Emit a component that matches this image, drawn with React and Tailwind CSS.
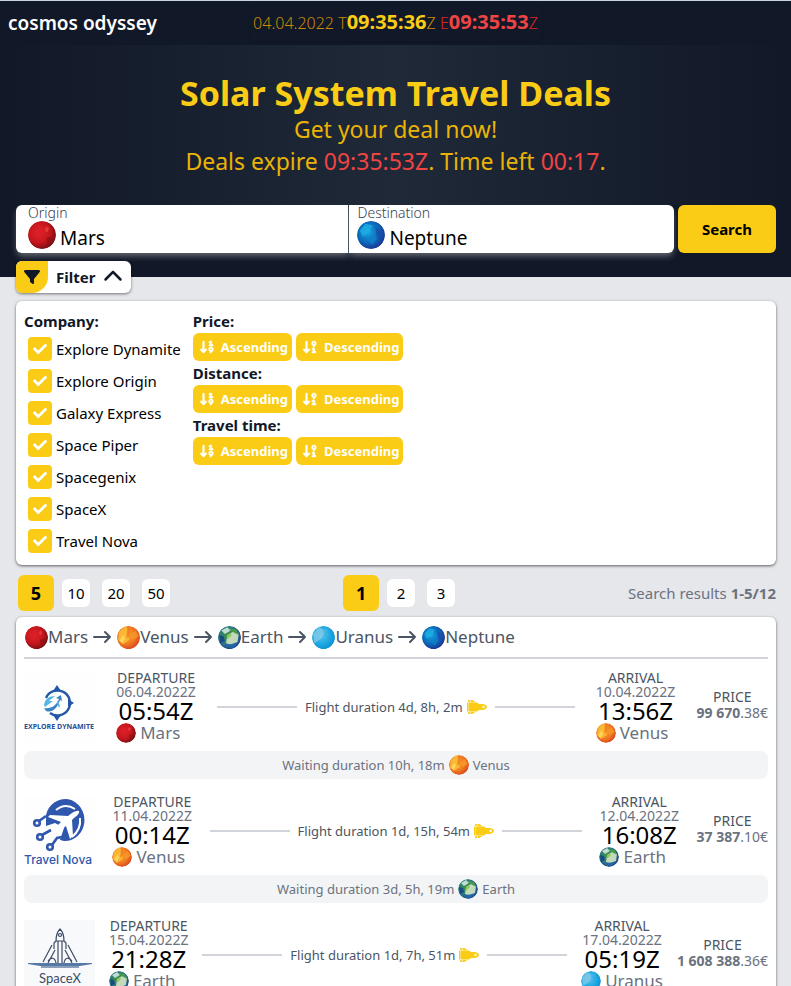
import React from "react";
import { FaCheck } from "react-icons/fa";
import { FaFilter, FaChevronUp, FaArrowDown19, FaArrowDown91 } from "react-icons/fa6";

const planetArt = {
  Mars: { stops: ["#e3222b", "#c4161c", "#6d0f12"], marks: [["M5 6l4-2 3 3-2 4-5 1z", "#d91f2a"], ["M13 12l4-1 1 4-4 3z", "#8f1115"], ["M13 4l2 1-1 3-2-1z", "#ee4444"]] },
  Venus: { stops: ["#fba62a", "#f07a22", "#d8431c"], marks: [["M2 5l5-5 3 3-1 5 2 4-6 4-4-4z", "#fdc43a"], ["M10 9l6-5 3 5-5 3z", "#f89a2a"], ["M5 8l2 2-2 5-3-2z", "#fbe06a"], ["M9 1l2 0 0 7-3 3z", "#ee7d20"]] },
  Earth: { stops: ["#3d9140", "#2c7a86", "#1c3f8c"], marks: [["M8 8l5-3 5 2-1 7-6 2-4-1z", "#f4fad2"], ["M3 4l5-3 3 3-5 3z", "#f2faf6"], ["M9 2l7 1 2 5-4-2z", "#53a637"], ["M3 15l5 1 9-1-5 5z", "#2667ad"], ["M1 8l4 1 1 4-4 2z", "#143a86"], ["M8 8l3-2 1 2-4 4z", "#7fbf4a"]] },
  Uranus: { stops: ["#5cc0ea", "#1ea9e3", "#0b8fd0"], marks: [["M1 7l5-6 6 3-4 7-6 4z", "#86cbe8"], ["M9 3l6-1-4 6z", "#42b4e6"]] },
  Neptune: { stops: ["#18a4e0", "#0b67b8", "#20308f"], marks: [["M2 7l4-5 5 1-2 5-5 3z", "#1fb2e6"], ["M7 13l5-4 2 4-3 4z", "#0f82ca"], ["M13 4l5 4-1 7-3-5z", "#1d4aa8"]] },
};

function Planet({ name, className }) {
  const { stops, marks } = planetArt[name];
  const id = React.useId();
  return (
    <svg viewBox="0 0 20 20" className={`shrink-0 ${className}`} aria-hidden="true">
      <defs>
        <radialGradient id={id} cx="0.4" cy="0.4" r="0.65">
          <stop offset="0" stopColor={stops[0]} />
          <stop offset="0.6" stopColor={stops[1]} />
          <stop offset="1" stopColor={stops[2]} />
        </radialGradient>
        <clipPath id={id + "c"}><circle cx="10" cy="10" r="10" /></clipPath>
      </defs>
      <g clipPath={`url(#${id}c)`}>
        <circle cx="10" cy="10" r="10" fill={`url(#${id})`} />
        {marks.map(([d, fill]) => <path key={d} d={d} fill={fill} opacity="0.75" />)}
      </g>
    </svg>
  );
}

function DynamiteLogo() {
  return (
    <svg viewBox="0 0 71 71" className="size-[71px] shrink-0" role="img" aria-label="Explore Dynamite">
      <rect width="71" height="71" fill="#fefefe" />
      <path d="M22 26a12.500 12.500 0 1 1 4 15" fill="none" stroke="#2458a6" strokeWidth="2.4" />
      <path d="M33 13l4 6h-8zM33 49l4-6h-8zM50 31l-6-4v8z" fill="#2458a6" />
      <path d="M20 36c7 1 12-2 15-9l-3-1 5-3 1 6-2-1c-3 9-8 13-14 11z" fill="#3b82c8" />
      <path d="M20 33c1-6 5-9 11-9l-6 5 4 0-8 6z" fill="#57b7e6" />
      <path d="M34 28l2 6-1 2-2-5z" fill="#57b7e6" />
      <text x="35" y="57" textAnchor="middle" className="font-['Open_Sans',sans-serif] text-[7px] font-bold" fill="#1f4f96">EXPLORE DYNAMITE</text>
    </svg>
  );
}

function NovaLogo() {
  return (
    <svg viewBox="0 0 71 71" className="size-[71px] shrink-0" role="img" aria-label="Travel Nova">
      <rect width="71" height="71" fill="#fefefe" />
      <path d="M22 19a19.500 21 0 1 1 18 26l-4-1 4-12-9-5-9 3z" fill="#2f57ae" />
      <path d="M32 14c6-5 13-5 19-1M56 22c1 8-2 14-8 19" fill="none" stroke="#fff" strokeWidth="2" />
      <path d="M55 15c-3-1-7 2-11 5l-18-1-2 2 13 5-6 6-5-1-2 2 6 3 3 6 2-1 0-5 7-6 4 13 3-3-1-16c4-4 8-6 7-9z" fill="#fff" />
      <g fill="none" stroke="#2f57ae" strokeWidth="2.6">
        <circle cx="13" cy="27" r="2.8" /><circle cx="16" cy="41" r="2.8" /><circle cx="26" cy="51" r="2.8" />
        <path d="M15 25l7-5M18 39l9-5M28 49l5-7 5-1" />
      </g>
      <text x="34" y="68" textAnchor="middle" className="font-[Inter,sans-serif] text-[12px] font-medium" fill="#2f57ae">Travel Nova</text>
    </svg>
  );
}

function SpaceXLogo() {
  return (
    <svg viewBox="0 0 71 71" className="size-[71px] shrink-0" role="img" aria-label="SpaceX">
      <rect width="71" height="71" fill="#f8f9fa" />
      <g fill="none" stroke="#3c4a66" strokeWidth="1.2">
        <path d="M32 21c0-6 2-10 4-12 2 2 4 6 4 12M32 21l-2 2v6M40 21l2 2v6M32 21h8M34 21v22M38 21v22M28 25l-9 17M44 25l9 17M31 30l-7 13M41 30l7 13M24 41c3-4 7-4 8 2M48 41c-3-4-7-4-8 2" />
        <circle cx="36" cy="15" r="1.5" />
      </g>
      <path d="M4 43h64v1l-12 2H16L4 44z" fill="#5679a6" />
      <path d="M17 46h38v2H17z" fill="#8ba0bd" />
      <text x="36" y="63" textAnchor="middle" className="font-[Lato,sans-serif] text-[13px]" fill="#3c4a66">SpaceX</text>
    </svg>
  );
}

function RouteArrow() {
  return (
    <svg viewBox="0 0 20 20" className="mx-1 size-5" fill="none" stroke="currentColor" strokeWidth="2" strokeLinecap="round" strokeLinejoin="round" aria-hidden="true">
      <path d="M2 10h16M13 5l5 5-5 5" />
    </svg>
  );
}

function Rocket() {
  return (
    <svg viewBox="0 0 20 14" className="h-3.5 w-5 shrink-0 text-[#facc15]" fill="currentColor" fillRule="evenodd" aria-hidden="true">
      <path d="M0 2.500h1.500v9H0zM1 0h2v1.800H1zM1 12.200h2v1.800H1zM3.600 0h1.600l3.600 2.200H3.600zM3.600 11.800h5.200L5.200 14H3.600z" />
      <path d="M1.800 2.400h8.200l2 1.600h3c3 0 5 1.600 5 3s-2 3-5 3h-3l-2 1.600H1.800zM15.600 5.800v2.200h1.600c.5-.6.500-1.600 0-2.200z" />
    </svg>
  );
}

const companies = ["Explore Dynamite", "Explore Origin", "Galaxy Express", "Space Piper", "Spacegenix", "SpaceX", "Travel Nova"];
const route = ["Mars", "Venus", "Earth", "Uranus", "Neptune"];

const legs = [
  { Logo: DynamiteLogo, dep: ["06.04.2022Z", "05:54Z", "Mars"], arr: ["10.04.2022Z", "13:56Z", "Venus"], flight: "4d, 8h, 2m", price: ["99 670", ".38€"], wait: "10h, 18m" },
  { Logo: NovaLogo, dep: ["11.04.2022Z", "00:14Z", "Venus"], arr: ["12.04.2022Z", "16:08Z", "Earth"], flight: "1d, 15h, 54m", price: ["37 387", ".10€"], wait: "3d, 5h, 19m" },
  { Logo: SpaceXLogo, dep: ["15.04.2022Z", "21:28Z", "Earth"], arr: ["17.04.2022Z", "05:19Z", "Uranus"], flight: "1d, 7h, 51m", price: ["1 608 388", ".36€"] },
];

function Stop({ label, info: [date, time, planet] }) {
  return (
    <div className="flex flex-col items-center whitespace-nowrap">
      <span className="text-sm leading-[14px] text-[#4b5563]">{label}</span>
      <span className="text-sm leading-[14px] text-[#6b7280]">{date}</span>
      <span className="text-2xl leading-6 text-black">{time}</span>
      <span className="flex items-center gap-1 self-start text-[17px] leading-5 text-[#6b7280]">
        <Planet name={planet} className="size-5" />
        {planet}
      </span>
    </div>
  );
}

function Leg({ leg }) {
  const { Logo } = leg;
  return (
    <li>
      <div className="flex items-center justify-between pt-3 pb-2">
        <Logo />
        <Stop label="DEPARTURE" info={leg.dep} />
        <div className="flex items-center gap-2 text-[13px] whitespace-nowrap text-[#4b5563]">
          <span className="h-[2px] w-20 bg-[#d1d5db]" />
          <span className="flex items-center gap-1">Flight duration {leg.flight} <Rocket /></span>
          <span className="h-[2px] w-20 bg-[#d1d5db]" />
        </div>
        <Stop label="ARRIVAL" info={leg.arr} />
        <div className="flex flex-col items-center pb-1 text-sm leading-4 whitespace-nowrap">
          <span className="text-[#4b5563]">PRICE</span>
          <span className="text-[#6b7280]"><b>{leg.price[0]}</b>{leg.price[1]}</span>
        </div>
      </div>
      {leg.wait && (
        <div className="mb-1 flex h-7 items-center justify-center gap-1 rounded-lg bg-[#f3f4f6] text-[13px] text-[#6b7280]">
          Waiting duration {leg.wait} <Planet name={leg.arr[2]} className="size-5" /> {leg.arr[2]}
        </div>
      )}
    </li>
  );
}

function Field({ label, value, id, className }) {
  return (
    <div className={`h-12 flex-1 bg-white shadow-[0_4px_6px_-1px_rgba(255,255,255,0.35)] ${className}`}>
      <label htmlFor={id} className="block text-sm leading-4 font-light text-[#374151]">{label}</label>
      <div className="flex items-start gap-1">
        <Planet name={value} className="size-7" />
        <input id={id} defaultValue={value} className="w-full min-w-0 bg-transparent pt-1 text-[19px] leading-[26px] text-black outline-none" />
      </div>
    </div>
  );
}

function Pager({ items, label }) {
  return (
    <nav aria-label={label} className="flex items-center gap-3">
      {items.map((n, i) => i === 0
        ? <button key={n} className="-mr-1 size-9 rounded-md bg-[#facc15] text-lg leading-6 font-bold text-black">{n}</button>
        : <button key={n} className="size-7 rounded-md bg-white text-[15px] text-black">{n}</button>)}
    </nav>
  );
}

export default function App() {
  return (
    <div className="min-h-screen bg-[#e5e7eb] font-['Noto_Sans',sans-serif] text-[15px] leading-6 text-[#111827]">
      <header className="grid grid-cols-[1fr_auto_1fr] items-center border-t border-[#cbd5e1] bg-[#111827] px-2 py-1">
        <a href="#" className="text-[19px] leading-7 font-semibold text-white">cosmos odyssey</a>
        <div className="rounded-md px-1 py-1 text-base leading-7 font-light whitespace-nowrap text-[#ca8a04] shadow-sm">
          04.04.2022 T<b className="text-xl leading-6 font-bold text-[#facc15]">09:35:36</b>Z <span className="text-[#dc2626]">E<b className="text-xl leading-6 font-bold text-[#ef4444]">09:35:53</b>Z</span>
        </div>
      </header>
      <section className="bg-[#111827] pb-6">
        <div className="flex flex-col items-center bg-linear-to-r/srgb from-[#111827] via-[#1f2937] to-[#111827] pt-7 pb-7 text-[23px] leading-8 text-[#eab308]">
          <h1 className="text-[34px] leading-10 font-bold text-[#facc15]">Solar System Travel Deals</h1>
          <p>Get your deal now!</p>
          <p>Deals expire <span className="text-[#ef4444]">09:35:53Z</span>. Time left <span className="text-[#ef4444]">00:17</span>.</p>
        </div>
        <form className="flex pr-[15px] pl-4">
          <Field id="origin" label="Origin" value="Mars" className="rounded-l-md border-r border-[#374151] px-3" />
          <Field id="destination" label="Destination" value="Neptune" className="rounded-r-md px-2" />
          <button type="button" className="ml-1 h-12 rounded-md bg-[#facc15] px-6 font-bold text-black">Search</button>
        </form>
      </section>
      <main className="pr-[15px] pl-4">
        <button className="relative -mt-4 flex h-8 items-center rounded-md bg-white pr-2 font-bold shadow-[0_1px_3px_rgba(0,0,0,0.5)]">
          <span className="flex size-8 items-center justify-center rounded-l-md rounded-br-2xl bg-[#facc15]"><FaFilter className="size-4" /></span>
          <span className="px-2">Filter</span>
          <FaChevronUp className="size-5" />
        </button>
        <section className="mt-2 flex gap-3 rounded-md bg-white p-2 shadow-[0_1px_3px_rgba(0,0,0,0.6)]">
          <fieldset>
            <legend className="font-bold">Company:</legend>
            {companies.map((c) => (
              <label key={c} className="flex h-8 items-center gap-1 pl-1 text-black">
                <span className="grid">
                  <input type="checkbox" defaultChecked className="col-start-1 row-start-1 size-6 appearance-none rounded-sm bg-[#facc15]" />
                  <FaCheck className="pointer-events-none col-start-1 row-start-1 size-3.5 place-self-center text-white" />
                </span>
                {c}
              </label>
            ))}
          </fieldset>
          <div>
            {["Price:", "Distance:", "Travel time:"].map((t) => (
              <div key={t}>
                <h2 className="font-bold">{t}</h2>
                <div className="flex gap-1 text-[13px] font-bold text-white">
                  <button className="flex h-7 items-center gap-1.5 rounded-md bg-[#facc15] pr-1 pl-1.5"><FaArrowDown19 className="h-3.5 w-4" stroke="currentColor" strokeWidth="16" />Ascending</button>
                  <button className="flex h-7 items-center gap-1.5 rounded-md bg-[#facc15] pr-1 pl-1.5"><FaArrowDown91 className="h-3.5 w-4" stroke="currentColor" strokeWidth="16" />Descending</button>
                </div>
              </div>
            ))}
          </div>
        </section>
        <div className="flex items-center justify-between pt-[10px] pb-[6px] pl-[2px]">
          <Pager items={[5, 10, 20, 50]} label="Results per page" />
          <Pager items={[1, 2, 3]} label="Page" />
          <p className="text-right text-[#6b7280]">Search results <b>1-5/12</b></p>
        </div>
        <article className="rounded-md bg-white p-2 shadow-[0_1px_3px_rgba(0,0,0,0.6)]">
          <h3 className="flex border-b-2 border-[#d1d5db] pb-2 text-[17px] leading-6 text-[#4b5563]">
            {route.map((p, i) => (
              <span key={p} className="flex items-center">
                {i > 0 && <RouteArrow />}
                <Planet name={p} className="ml-px size-[23px]" />{p}
              </span>
            ))}
          </h3>
          <ol>{legs.map((l) => <Leg key={l.flight} leg={l} />)}</ol>
        </article>
      </main>
    </div>
  );
}
